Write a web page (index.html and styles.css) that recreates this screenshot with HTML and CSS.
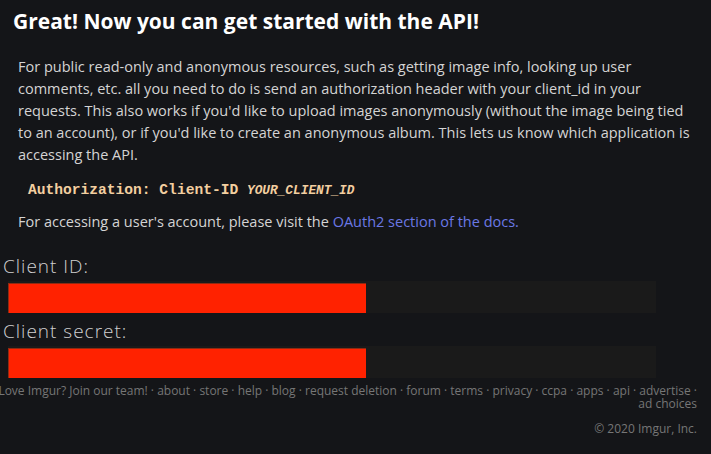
FILE: index.html
```html
<!DOCTYPE html>
<html>
<head>
<meta charset="utf-8">
<link rel="stylesheet" href="styles.css">
</head>
<body>
<div class="page">
  <h1 class="title">Great! Now you can get started with the API!</h1>
  <div class="intro">
    <p class="text">For public read-only and anonymous resources, such as getting image info, looking up user comments, etc. all you need to do is send an authorization header with your client_id in your requests. This also works if you'd like to upload images anonymously (without the image being tied to an account), or if you'd like to create an anonymous album. This lets us know which application is accessing the API.</p>
    <pre class="code">Authorization: Client-ID <i>YOUR_CLIENT_ID</i></pre>
    <p class="text">For accessing a user's account, please visit the <a class="link" href="#">OAuth2 section of the docs.</a></p>
  </div>
  <div class="field">
    <label class="label">Client ID:</label>
    <div class="input"><span class="redact"></span></div>
  </div>
  <div class="field">
    <label class="label">Client secret:</label>
    <div class="input"><span class="redact"></span></div>
  </div>
  <div class="footer">
    <div class="links">Love Imgur? Join our team! · about · store · help · blog · request deletion · forum · terms · privacy · ccpa · apps · api · advertise ·</div>
    <div class="links">ad choices</div>
    <div class="copy">© 2020 Imgur, Inc.</div>
  </div>
</div>
</body>
</html>
```

FILE: styles.css
```css
html, body {
  margin: 0;
  padding: 0;
  background: #141518;
}
.page {
  width: 711px;
  height: 454px;
  overflow: hidden;
  font-family: "Open Sans", "Noto Sans", sans-serif;
  color: #d5d5d5;
}
.title {
  margin: 0;
  padding: 8px 0 0 13px;
  font-size: 21px;
  line-height: 27px;
  font-weight: 700;
  color: #ffffff;
}
.intro {
  padding: 21px 21px 0 18px;
}
.text {
  margin: 0;
  font-size: 14.5px;
  line-height: 22px;
  color: #d4d4d4;
}
.code {
  margin: 13px 0 9px 10px;
  font-family: "Liberation Mono", monospace;
  font-weight: 700;
  font-size: 14.6px;
  line-height: 22px;
  color: #f3cfa0;
}
.code i {
  font-size: 12.8px;
}
.link {
  color: #6b78e5;
  text-decoration: none;
}
.field {
  display: flex;
  flex-direction: column;
}
.field + .field {
  margin-top: 6px;
}
.label {
  display: block;
  margin: 21px 0 3px 0;
  padding-left: 3px;
  font-size: 19px;
  letter-spacing: 1px;
  font-weight: 300;
  line-height: 24px;
  color: #d0d0d0;
}
.field + .field .label {
  margin-top: 0;
}
.input {
  margin-left: 8px;
  width: 648px;
  height: 32px;
  background: #1a1a1a;
  display: flex;
}
.redact {
  width: 358px;
  height: 30px;
  margin-top: 2px;
  box-sizing: border-box;
  background: #ff2200;
  border-top: 1px solid #8e2a12;
  border-left: 1px solid #8e2a12;
}
.footer {
  display: flex;
  flex-direction: column;
  align-items: flex-end;
  padding: 7px 14px 0 0;
  font-size: 12px;
  line-height: 12.5px;
  color: #767676;
}
.links {
  white-space: nowrap;
}
.copy {
  margin-top: 13px;
}
```
